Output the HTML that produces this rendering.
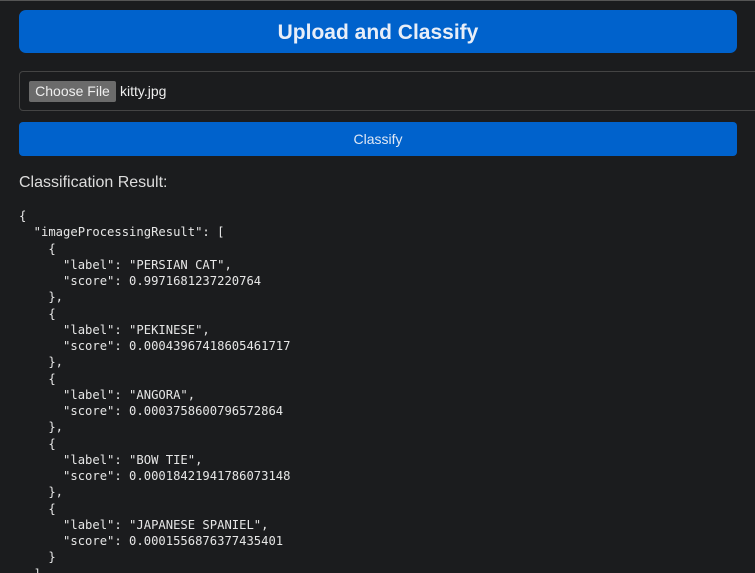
<!DOCTYPE html>
<html><head><style>
html,body{margin:0;padding:0;background:#1b1c1e;width:755px;height:573px;overflow:hidden}
body{border-top:1px solid #555;box-sizing:border-box;font-family:"Liberation Sans",sans-serif;position:relative}
.t{position:absolute;left:19px;top:9px;width:718px;height:43px;background:#0062cc;border-radius:7px;color:#e8eef8;font-weight:bold;font-size:21px;text-align:center;line-height:45px}
.f{position:absolute;left:19px;top:70px;width:760px;height:40px;border:1px solid #444;border-radius:4px;box-sizing:border-box}
.cf{position:absolute;left:9px;top:9px;width:87px;height:21px;background:#6b6b6b;border-radius:2px;color:#eee;font-size:14px;text-align:center;line-height:21px}
.fn{position:absolute;left:100px;top:9px;color:#eee;font-size:14px;line-height:21px}
.c{position:absolute;left:19px;top:121px;width:718px;height:34px;background:#0062cc;border-radius:4px;color:#dfe8f5;font-size:14px;text-align:center;line-height:34px}
.h{position:absolute;left:19px;top:172px;color:#ddd;font-size:16px;line-height:20px}
pre{position:absolute;left:19px;top:207px;margin:0;color:#e6e6e6;font-family:"DejaVu Sans Mono",monospace;font-size:12.2px;line-height:16.25px}
</style></head><body>
<div class="t">Upload and Classify</div>
<div class="f"><div class="cf">Choose File</div><div class="fn">kitty.jpg</div></div>
<div class="c">Classify</div>
<div class="h">Classification Result:</div>
<pre>{
  "imageProcessingResult": [
    {
      "label": "PERSIAN CAT",
      "score": 0.9971681237220764
    },
    {
      "label": "PEKINESE",
      "score": 0.00043967418605461717
    },
    {
      "label": "ANGORA",
      "score": 0.0003758600796572864
    },
    {
      "label": "BOW TIE",
      "score": 0.00018421941786073148
    },
    {
      "label": "JAPANESE SPANIEL",
      "score": 0.0001556876377435401
    }
  ]
}</pre>
</body></html>
